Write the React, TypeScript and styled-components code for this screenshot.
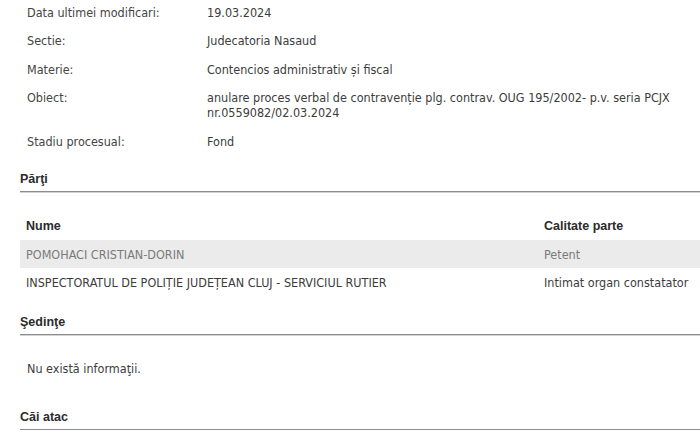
import React from 'react'
import styled, { createGlobalStyle } from 'styled-components'

const GlobalStyle = createGlobalStyle`
  html, body {
    margin: 0;
    padding: 0;
    background: #ffffff;
  }
  body {
    font-family: "DejaVu Sans Condensed", "DejaVu Sans", Tahoma, sans-serif;
    font-size: 12.5px;
    color: #333;
  }
`

const Page = styled.div`
  padding: 0 0 0 20px;
`

const Details = styled.div`
  display: flex;
  flex-direction: column;
  padding: 4.5px 0 0 7px;
`

const DetailRow = styled.div`
  display: grid;
  grid-template-columns: 180px 1fr;
  padding: 0 0 13.5px;
  line-height: 15px;
  color: #3c3c3c;
  font-size: 12.5px;
`

const Label = styled.div`
  color: #444;
`

const Value = styled.div`
  padding-right: 10px;
`

const SectionTitle = styled.div<{ $gap: number }>`
  margin-top: ${p => p.$gap}px;
  font-family: "Liberation Sans", Arial, sans-serif;
  font-weight: bold;
  font-size: 12.5px;
  line-height: 15px;
  color: #2b2b2b;
  padding-bottom: 4px;
  border-bottom: 1px solid #8c8c8c;
  box-shadow: 0 1px 0 #d2d2d2;
`

const PartiTable = styled.table`
  width: 100%;
  margin-top: 20px;
  border-collapse: collapse;
`

const HeadRow = styled.tr`
  & th {
    text-align: left;
    font-family: "Liberation Sans", Arial, sans-serif;
    font-weight: bold;
    color: #2b2b2b;
    height: 28px;
    padding: 0 6px;
    font-size: 12.5px;
  }
`

const BodyRow = styled.tr<{ $shaded?: boolean }>`
  background: ${p => (p.$shaded ? '#ebebeb' : 'transparent')};
  & td {
    height: 28px;
    padding: 0 6px;
    font-size: 12.5px;
    color: ${p => (p.$shaded ? '#7a7a7a' : '#3c3c3c')};
  }
`

const NameCell = styled.td`
  width: 506px;
`

const Empty = styled.div`
  padding: 26px 0 0 7px;
  line-height: 15px;
  font-size: 12.5px;
  color: #3c3c3c;
`

const details = [
  { label: 'Data ultimei modificari:', value: '19.03.2024' },
  { label: 'Sectie:', value: 'Judecatoria Nasaud' },
  { label: 'Materie:', value: 'Contencios administrativ și fiscal' },
  {
    label: 'Obiect:',
    value: 'anulare proces verbal de contravenție plg. contrav. OUG 195/2002- p.v. seria PCJX nr.0559082/02.03.2024',
  },
  { label: 'Stadiu procesual:', value: 'Fond' },
]

const parti = [
  { nume: 'POMOHACI CRISTIAN-DORIN', calitate: 'Petent' },
  { nume: 'INSPECTORATUL DE POLIȚIE JUDEȚEAN CLUJ - SERVICIUL RUTIER', calitate: 'Intimat organ constatator' },
]

const App = () => {
  return (
    <>
      <GlobalStyle />
      <Page>
        <Details>
          {details.map(d => (
            <DetailRow key={d.label}>
              <Label>{d.label}</Label>
              <Value>{d.value}</Value>
            </DetailRow>
          ))}
        </Details>
        <SectionTitle $gap={10}>Părţi</SectionTitle>
        <PartiTable>
          <thead>
            <HeadRow>
              <th>Nume</th>
              <th>Calitate parte</th>
            </HeadRow>
          </thead>
          <tbody>
            {parti.map((p, i) => (
              <BodyRow key={p.nume} $shaded={i % 2 === 0}>
                <NameCell>{p.nume}</NameCell>
                <td>{p.calitate}</td>
              </BodyRow>
            ))}
          </tbody>
        </PartiTable>
        <SectionTitle $gap={19}>Şedinţe</SectionTitle>
        <Empty>Nu există informaţii.</Empty>
        <SectionTitle $gap={34}>Căi atac</SectionTitle>
      </Page>
    </>
  )
}

export default App
